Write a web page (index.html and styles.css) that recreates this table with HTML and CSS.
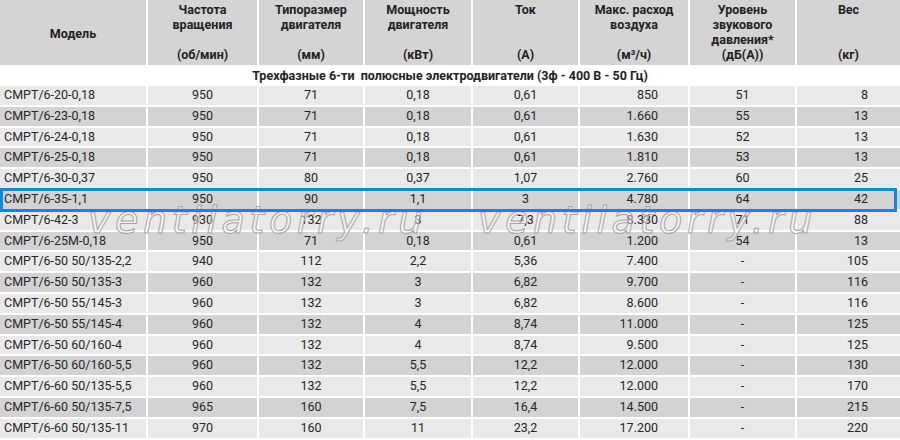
FILE: index.html
```html
<!DOCTYPE html>
<html lang="ru">
<head>
<meta charset="utf-8">
<title>СМРТ/6</title>
<link rel="stylesheet" href="styles.css">
</head>
<body>
<div class="sheet">
  <div class="head">
    <div class="hc hc-mid"><span>Модель</span></div>
    <div class="hc"><span>Частота<br>вращения</span><span>(об/мин)</span></div>
    <div class="hc"><span>Типоразмер<br>двигателя</span><span>(мм)</span></div>
    <div class="hc"><span>Мощность<br>двигателя</span><span>(кВт)</span></div>
    <div class="hc"><span>Ток</span><span>(А)</span></div>
    <div class="hc"><span>Макс. расход<br>воздуха</span><span>(м³/ч)</span></div>
    <div class="hc"><span>Уровень<br>звукового<br>давления*</span><span>(дБ(А))</span></div>
    <div class="hc"><span>Вес</span><span>(кг)</span></div>
  </div>
  <div class="group">Трехфазные 6-ти&nbsp; полюсные электродвигатели (3ф - 400 В - 50 Гц)</div>
  <div class="rows">
    <div class="row"><div class="c c1">СМРТ/6-20-0,18</div><div class="c">950</div><div class="c">71</div><div class="c">0,18</div><div class="c">0,61</div><div class="c c6">850</div><div class="c">51</div><div class="c c8">8</div></div>
    <div class="row"><div class="c c1">СМРТ/6-23-0,18</div><div class="c">950</div><div class="c">71</div><div class="c">0,18</div><div class="c">0,61</div><div class="c c6">1.660</div><div class="c">55</div><div class="c c8">13</div></div>
    <div class="row"><div class="c c1">СМРТ/6-24-0,18</div><div class="c">950</div><div class="c">71</div><div class="c">0,18</div><div class="c">0,61</div><div class="c c6">1.630</div><div class="c">52</div><div class="c c8">13</div></div>
    <div class="row"><div class="c c1">СМРТ/6-25-0,18</div><div class="c">950</div><div class="c">71</div><div class="c">0,18</div><div class="c">0,61</div><div class="c c6">1.810</div><div class="c">53</div><div class="c c8">13</div></div>
    <div class="row"><div class="c c1">СМРТ/6-30-0,37</div><div class="c">950</div><div class="c">80</div><div class="c">0,37</div><div class="c">1,07</div><div class="c c6">2.760</div><div class="c">60</div><div class="c c8">25</div></div>
    <div class="row"><div class="c c1">СМРТ/6-35-1,1</div><div class="c">950</div><div class="c">90</div><div class="c">1,1</div><div class="c">3</div><div class="c c6">4.780</div><div class="c">64</div><div class="c c8">42</div></div>
    <div class="row"><div class="c c1">СМРТ/6-42-3</div><div class="c">930</div><div class="c">132</div><div class="c">3</div><div class="c">7,3</div><div class="c c6">8.330</div><div class="c">71</div><div class="c c8">88</div></div>
    <div class="row"><div class="c c1">СМРТ/6-25М-0,18</div><div class="c">950</div><div class="c">71</div><div class="c">0,18</div><div class="c">0,61</div><div class="c c6">1.200</div><div class="c">54</div><div class="c c8">13</div></div>
    <div class="row"><div class="c c1">СМРТ/6-50 50/135-2,2</div><div class="c">940</div><div class="c">112</div><div class="c">2,2</div><div class="c">5,36</div><div class="c c6">7.400</div><div class="c">-</div><div class="c c8">105</div></div>
    <div class="row"><div class="c c1">СМРТ/6-50 50/135-3</div><div class="c">960</div><div class="c">132</div><div class="c">3</div><div class="c">6,82</div><div class="c c6">9.700</div><div class="c">-</div><div class="c c8">116</div></div>
    <div class="row"><div class="c c1">СМРТ/6-50 55/145-3</div><div class="c">960</div><div class="c">132</div><div class="c">3</div><div class="c">6,82</div><div class="c c6">8.600</div><div class="c">-</div><div class="c c8">116</div></div>
    <div class="row"><div class="c c1">СМРТ/6-50 55/145-4</div><div class="c">960</div><div class="c">132</div><div class="c">4</div><div class="c">8,74</div><div class="c c6">11.000</div><div class="c">-</div><div class="c c8">125</div></div>
    <div class="row"><div class="c c1">СМРТ/6-50 60/160-4</div><div class="c">960</div><div class="c">132</div><div class="c">4</div><div class="c">8,74</div><div class="c c6">9.500</div><div class="c">-</div><div class="c c8">125</div></div>
    <div class="row"><div class="c c1">СМРТ/6-50 60/160-5,5</div><div class="c">960</div><div class="c">132</div><div class="c">5,5</div><div class="c">12,2</div><div class="c c6">12.000</div><div class="c">-</div><div class="c c8">130</div></div>
    <div class="row"><div class="c c1">СМРТ/6-60 50/135-5,5</div><div class="c">960</div><div class="c">132</div><div class="c">5,5</div><div class="c">12,2</div><div class="c c6">12.000</div><div class="c">-</div><div class="c c8">170</div></div>
    <div class="row"><div class="c c1">СМРТ/6-60 50/135-7,5</div><div class="c">965</div><div class="c">160</div><div class="c">7,5</div><div class="c">16,4</div><div class="c c6">14.500</div><div class="c">-</div><div class="c c8">215</div></div>
    <div class="row"><div class="c c1">СМРТ/6-60 50/135-11</div><div class="c">970</div><div class="c">160</div><div class="c">11</div><div class="c">23,2</div><div class="c c6">17.200</div><div class="c">-</div><div class="c c8">220</div></div>
  </div>
  <div class="mark mark-a">ventilatorry.ru</div>
  <div class="mark mark-b">ventilatorry.ru</div>
  <div class="highlight"></div>
</div>
</body>
</html>
```

FILE: styles.css
```css
html, body {
  margin: 0;
  padding: 0;
  background: #ffffff;
}

.sheet {
  position: relative;
  width: 900px;
  height: 440px;
  overflow: hidden;
  font-family: Roboto, "Liberation Sans", sans-serif;
  color: #262626;
}

.head,
.row {
  display: grid;
  grid-template-columns: 146px 109px 104px 106px 105px 108px 105px 103px;
  column-gap: 2px;
}

.head {
  height: 65px;
}

.hc {
  background: #d4d4d4;
  display: flex;
  flex-direction: column;
  justify-content: space-between;
  align-items: center;
  text-align: center;
  padding: 2px 2px 3px;
  font-size: 12.5px;
  font-weight: 700;
  line-height: 15px;
  color: #222222;
}

.hc-mid {
  justify-content: center;
  padding-bottom: 1px;
}

.group {
  height: 21px;
  line-height: 21px;
  text-align: center;
  font-size: 12.5px;
  font-weight: 700;
  color: #222222;
  white-space: pre;
}

.rows {
  display: flex;
  flex-direction: column;
  row-gap: 2px;
}

.row {
  height: 18.8px;
}

.c {
  background: #e9e9e9;
  font-size: 12.5px;
  line-height: 18.8px;
  text-align: center;
  white-space: nowrap;
}

.row:nth-child(even) .c {
  background: #d3d3d3;
}

.c1 {
  text-align: left;
  padding-left: 4px;
}

.c6 {
  text-align: right;
  padding-right: 30px;
}

.c8 {
  text-align: right;
  padding-right: 32px;
}

.mark {
  position: absolute;
  top: 201px;
  font-family: "DejaVu Sans", sans-serif;
  font-style: italic;
  font-size: 38px;
  line-height: 38px;
  letter-spacing: 4.6px;
  color: rgba(255, 255, 255, 0.45);
  -webkit-text-stroke: 1px #a6a6a6;
  white-space: nowrap;
  pointer-events: none;
}

.mark-a {
  left: 88px;
}

.mark-b {
  left: 478px;
}

.highlight {
  position: absolute;
  left: 0;
  top: 188px;
  width: 897px;
  height: 24px;
  box-sizing: border-box;
  border: 3px solid #1587d4;
  pointer-events: none;
}
```
